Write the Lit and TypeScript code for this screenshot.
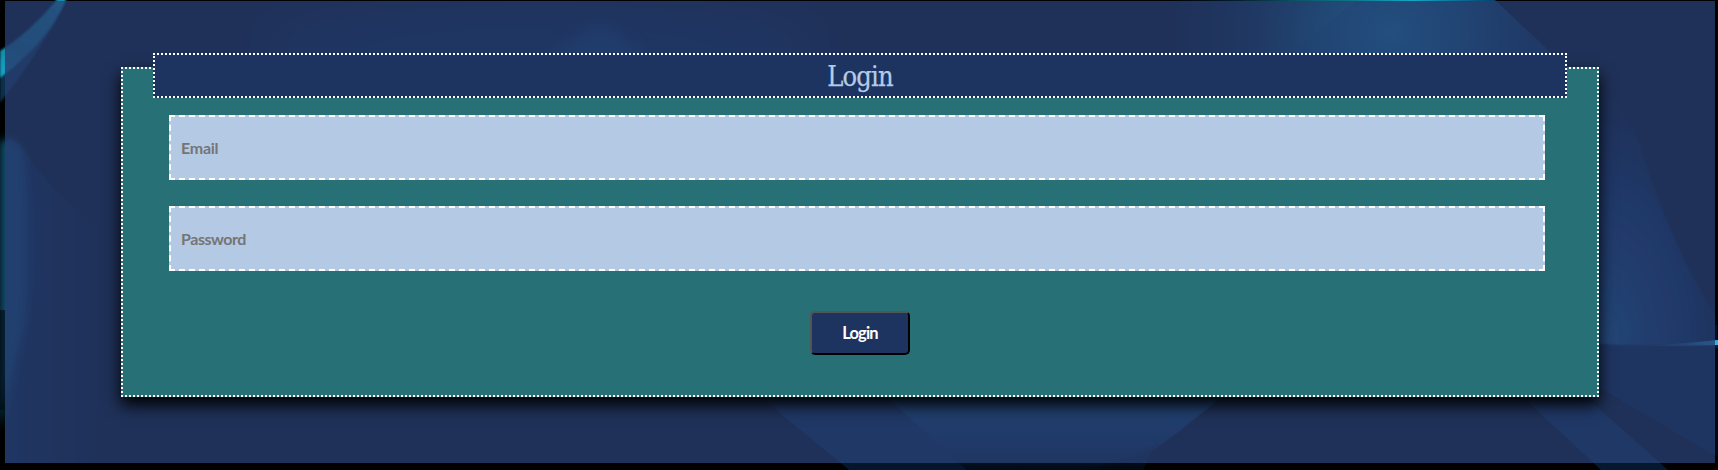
import { LitElement, html, css } from "lit";
import { customElement } from "lit/decorators.js";

@customElement("app-root")
export class AppRoot extends LitElement {
  static styles = css`
    :host {
      display: block;
      position: relative;
      height: 470px;
      box-sizing: border-box;
      padding: 1px 3px 7px 5px;
      background: #000;
      overflow: hidden;
      font-family: Lato, "Open Sans", sans-serif;
    }
    .backdrop {
      position: absolute;
      inset: 0;
      width: 100%;
      height: 100%;
    }
    .panel {
      position: relative;
      box-sizing: border-box;
      height: 462px;
      padding: 66px 116px;
      background: rgba(39, 61, 110, 0.8);
    }
    .card {
      box-sizing: border-box;
      height: 330px;
      display: flex;
      flex-direction: column;
      border: 2px dotted #fff;
      background: #277176;
      box-shadow: 0 8px 15px #000;
    }
    .title {
      box-sizing: border-box;
      height: 45px;
      margin: -16px 30px 17px;
      padding-top: 1px;
      border: 2px dotted #fff;
      background: #1d3461;
      color: #b4cbe8;
      font: 400 27px/41px "DejaVu Serif Condensed", "DejaVu Serif", serif;
      font-stretch: condensed;
      letter-spacing: -0.8px;
      -webkit-text-stroke: 0.25px #b4cbe8;
      text-align: center;
    }
    .field {
      box-sizing: border-box;
      height: 65px;
      margin: 0 52px 26px 46px;
      padding: 0 10px;
      border: 2px dashed #fff;
      border-radius: 0;
      outline: none;
      background: #b4c9e4;
      color: #333;
      font: 700 16px Lato, sans-serif;
      letter-spacing: -0.25px;
    }
    .field[type="password"] {
      letter-spacing: -0.45px;
    }
    .field::placeholder {
      color: #757575;
    }
    .submit {
      box-sizing: border-box;
      align-self: center;
      width: 100px;
      height: 44px;
      margin-top: 14px;
      padding: 0;
      border: 2px outset #000;
      border-radius: 5px;
      background: #1d3461;
      color: #fff;
      font: 700 16.5px Lato, sans-serif;
      letter-spacing: -0.9px;
    }
  `;

  render() {
    return html`
      <svg class="backdrop" viewBox="0 0 1718 470" preserveAspectRatio="none" aria-hidden="true">
        <defs>
          <radialGradient id="glow" gradientUnits="userSpaceOnUse" cx="0" cy="0" r="1" gradientTransform="translate(1390 32) scale(230 190)">
            <stop offset="0" stop-color="#18b4dc" />
            <stop offset=".3" stop-color="#1192b4" stop-opacity=".8" />
            <stop offset=".6" stop-color="#0a5074" stop-opacity=".5" />
            <stop offset="1" stop-color="#003060" stop-opacity="0" />
          </radialGradient>
          <linearGradient id="topline" x1="0" x2="1">
            <stop offset="0" stop-color="#063038" stop-opacity="0" />
            <stop offset=".45" stop-color="#0e7080" />
            <stop offset=".7" stop-color="#14a8c8" />
            <stop offset="1" stop-color="#064070" />
          </linearGradient>
          <linearGradient id="ray" gradientUnits="userSpaceOnUse" x1="0" y1="80" x2="62" y2="0">
            <stop offset="0" stop-color="#16a6c8" />
            <stop offset=".35" stop-color="#158fb0" stop-opacity=".9" />
            <stop offset=".85" stop-color="#179dbf" />
            <stop offset="1" stop-color="#20c4e4" />
          </linearGradient>
          <linearGradient id="leaf" x1="0" x2="1">
            <stop offset="0" stop-color="#07516c" />
            <stop offset=".6" stop-color="#0d5080" stop-opacity=".9" />
            <stop offset="1" stop-color="#063058" stop-opacity=".4" />
          </linearGradient>
          <linearGradient id="haze" gradientUnits="userSpaceOnUse" x1="0" y1="0" x2="120" y2="0">
            <stop offset="0" stop-color="#06254a" stop-opacity=".8" />
            <stop offset="1" stop-color="#041c40" stop-opacity="0" />
          </linearGradient>
          <linearGradient id="fall" x1="0" y1="0" x2="0" y2="1">
            <stop offset="0" stop-color="#14689c" />
            <stop offset="1" stop-color="#03152e" />
          </linearGradient>
          <radialGradient id="wing" gradientUnits="userSpaceOnUse" cx="0" cy="0" r="1" gradientTransform="translate(1600 345) scale(150 270)">
            <stop offset="0" stop-color="#1875a8" />
            <stop offset=".3" stop-color="#0b4880" stop-opacity=".9" />
            <stop offset=".6" stop-color="#073068" stop-opacity=".75" />
            <stop offset="1" stop-color="#031838" stop-opacity="0" />
          </radialGradient>
          <linearGradient id="edge" x1="0" x2="1">
            <stop offset="0" stop-color="#1486ae" stop-opacity="0" />
            <stop offset="1" stop-color="#35c5ef" />
          </linearGradient>
          <filter id="soft1" x="-30%" y="-30%" width="160%" height="160%"><feGaussianBlur stdDeviation="1" /></filter>
          <filter id="soft5" x="-60%" y="-30%" width="220%" height="160%"><feGaussianBlur stdDeviation="4" /></filter>
          <filter id="soft30" filterUnits="userSpaceOnUse" x="-100" y="-150" width="1400" height="800"><feGaussianBlur stdDeviation="30" /></filter>
          <filter id="soft10" filterUnits="userSpaceOnUse" x="400" y="-60" width="400" height="260"><feGaussianBlur stdDeviation="8" /></filter>
          <clipPath id="inner"><rect x="5" y="1" width="1710" height="462" /></clipPath>
        </defs>

        <g clip-path="url(#inner)">
          <ellipse cx="540" cy="50" rx="290" ry="45" fill="#041c40" filter="url(#soft30)" />
          <path d="M545 70Q560 45 598 24Q625 30 650 70Z" fill="#0c4470" opacity=".75" filter="url(#soft10)" />
        </g>

        <path d="M57 0H66L55 22Q34 60 0 103V60Q28 32 57 0Z" fill="#0a3c60" opacity=".8" filter="url(#soft1)" />
        <path d="M57 0H66Q48 42 0 78V51Q30 32 57 0Z" fill="url(#ray)" filter="url(#soft1)" />

        <path d="M5 142Q12 133 24 151Q45 183 75 208L125 250V440L90 463H5Z" fill="url(#haze)" />
        <path d="M0 142Q12 133 23 150Q44 260 22 335Q10 380 0 430Z" fill="url(#leaf)" filter="url(#soft5)" />
        <path d="M0 310H5V410H0Z" fill="#020812" opacity=".6" />

        <path d="M1100 0H1495L1580 80H1100Z" fill="url(#glow)" />
        <path d="M1357 0H1495L1580 80H1257Z" fill="#0d4a86" opacity=".3" />
        <rect x="1220" width="275" height="1" fill="url(#topline)" />

        <path d="M1590 80Q1625 105 1640 145Q1668 240 1718 320V341Q1660 348 1590 344Z" fill="url(#wing)" filter="url(#soft1)" />
        <path d="M1590 344Q1660 348 1718 341V457L1590 382Z" fill="#06244c" opacity=".65" />
        <path d="M1640 346Q1690 343 1718 340V345Q1690 346 1640 346Z" fill="url(#edge)" />
        <path d="M1690 343L1718 340V345Z" fill="#27aedb" opacity=".65" />
        <rect x="1715" y="0" width="3" height="325" fill="#000" opacity=".75" />
        <rect x="1715" y="348" width="3" height="122" fill="#000" opacity=".65" />
        <path d="M1515 390H1578L1668 470H1601Z" fill="#08305c" opacity=".75" />

        <path d="M752 390H880L967 470H849Z" fill="#072c56" opacity=".85" />
        <path d="M870 382H1240Q1175 436 1151 452Q1147 462 1143 470H967Z" fill="url(#fall)" opacity=".95" />
        <path d="M1233 390Q1150 460 1083 470H1143L1160 443Z" fill="#000" opacity=".25" filter="url(#soft1)" />
        <rect x="700" y="463" width="500" height="7" fill="#000" opacity=".4" />
        <rect x="1590" y="463" width="90" height="7" fill="#000" opacity=".3" />
      </svg>
      <main class="panel">
        <form class="card" @submit=${(e: Event) => e.preventDefault()}>
          <div class="title">Login</div>
          <input class="field" type="email" placeholder="Email" />
          <input class="field" type="password" placeholder="Password" />
          <button class="submit" type="submit">Login</button>
        </form>
      </main>
    `;
  }
}
